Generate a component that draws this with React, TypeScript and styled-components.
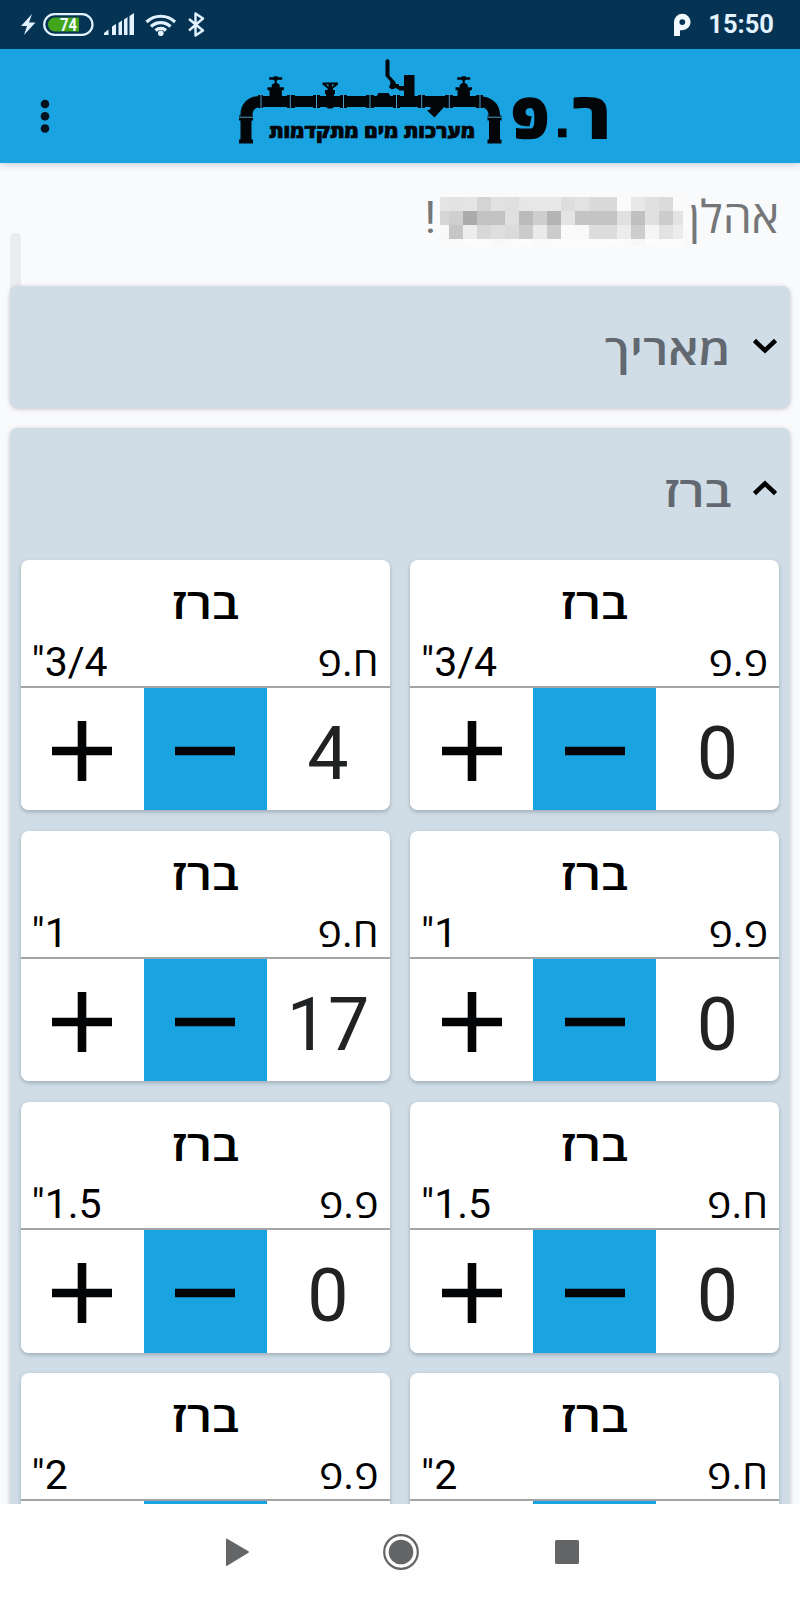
import React from 'react';
import styled, { createGlobalStyle } from 'styled-components';

const GlobalStyle = createGlobalStyle`
  * { box-sizing: border-box; }
  body { margin: 0; background: #f9fafc; font-family: Roboto, "Open Sans", sans-serif; }
`;

const Screen = styled.div`
  width: 800px;
  height: 1600px;
  display: flex;
  flex-direction: column;
  overflow: hidden;
  background: #f9fafc;
`;

const StatusBar = styled.div`
  height: 49px;
  flex: none;
  display: flex;
  justify-content: space-between;
  background: #043353;
`;

const StatusSide = styled.div`
  display: flex;
  align-items: center;
  gap: 17px;
  padding-right: 26px;
`;

const Clock = styled.span`
  font-size: 25.5px;
  font-weight: 700;
  line-height: 51px;
  color: #e2f2ff;
`;

const Header = styled.header`
  height: 114px;
  flex: none;
  display: flex;
  background: #1aa3e1;
  box-shadow: 0 1px 8px rgba(30, 90, 130, 0.3);
`;

const Content = styled.main`
  position: relative;
  height: 1341px;
  flex: none;
  direction: rtl;
  overflow: hidden;
  padding: 0 10px;
`;

const ScrollThumb = styled.div`
  position: absolute;
  left: 10px;
  top: 70px;
  width: 11px;
  height: 120px;
  border-radius: 4px;
  background: #ebecee;
`;

const Greeting = styled.div`
  height: 123px;
  display: flex;
  padding: 17px 11px 0;
  font-size: 45px;
  line-height: 75px;
  color: #757677;
`;

const Hello = styled.span`
  width: 89px;
  white-space: nowrap;
  transform: scaleX(1.03);
  transform-origin: right;
`;

const Mosaic = styled.div`
  display: grid;
  direction: ltr;
  grid-template-columns: 9px repeat(16, 14px) 10px;
  grid-template-rows: repeat(3, 14px) 7px;
  height: 49px;
  margin: 17px 7px 0 4px;
`;

const Pixel = styled.i<{ $shade: string }>`
  background: ${(p) => '#' + p.$shade.repeat(3)};
`;

const Panel = styled.section<{ $open?: boolean }>`
  position: relative;
  height: ${(p) => (p.$open ? '1200px' : '122px')};
  margin-bottom: 20px;
  border-radius: 8px;
  background: #d1dde6;
  box-shadow: 0 1px 4px rgba(60, 50, 80, 0.28);
`;

const PanelHead = styled.div<{ $open?: boolean }>`
  height: ${(p) => (p.$open ? '132px' : '122px')};
  display: flex;
  align-items: flex-start;
  padding: 0 13px;
`;

const Chevron = styled.svg<{ $open?: boolean }>`
  width: 24px;
  height: 16px;
  margin-top: 52px;
  transform: ${(p) => (p.$open ? 'rotate(180deg)' : 'none')};
`;

const PanelTitle = styled.h2`
  margin: 33px 22px 0 0;
  font-size: 42px;
  font-weight: 650;
  line-height: 64px;
  color: #62686f;
  transform: scaleX(1.17);
  transform-origin: right;
`;

const CardGrid = styled.div`
  display: grid;
  grid-template-columns: 369px 369px;
  grid-auto-rows: 250.4px;
  gap: 20.7px 20.5px;
  padding: 0 11px;
`;

const Card = styled.article`
  border-radius: 8px;
  overflow: hidden;
  background: #fff;
  box-shadow: 0 2px 4px rgba(40, 60, 80, 0.3);
`;

const CardHead = styled.div`
  height: 128px;
  padding: 13px 11px 0;
  border-bottom: 2px solid #a3a4a5;
  color: #000;
`;

const CardTitle = styled.h3`
  margin: 0;
  font-size: 42px;
  font-weight: 650;
  line-height: 63px;
  text-align: center;
  transform: scaleX(1.17);
`;

const CardSpec = styled.div`
  display: flex;
  justify-content: space-between;
  font-size: 41px;
  line-height: 52px;
`;

const Stepper = styled.div`
  display: grid;
  grid-template-columns: repeat(3, 1fr);
  height: 122.4px;
`;

const Count = styled.span`
  font-size: 73.5px;
  line-height: 132px;
  text-align: center;
  color: #212223;
`;

const StepButton = styled.button<{ $accent?: boolean }>`
  display: flex;
  align-items: center;
  justify-content: center;
  border: 0;
  padding: 0 0 7px;
  background: ${(p) => (p.$accent ? '#1aa3e1' : '#fff')};
`;

const NavBar = styled.nav`
  position: relative;
  height: 96px;
  flex: none;
  background: #fefefe;
`;

const mosaicRows = [
  'e4 e3 e4 d4 e1 df e7 e8 e8 dd e3 da da fa e8 e0 db fa',
  'd6 cf ab c2 c2 e0 bb ce b4 e4 c5 c4 c4 e0 c0 e0 cc e3',
  'f9 c6 ed d8 de da cc ea cc fa f9 dc dc ec cd f5 e3 ec',
  'f9 f9 fc fb f8 fb fc fa fb fc fb fb fc fb f7 fc fb fc',
];

const items: { kind: string; size: string; count?: number }[] = [
  { kind: 'פ.פ', size: '3/4"', count: 0 },
  { kind: 'ח.פ', size: '3/4"', count: 4 },
  { kind: 'פ.פ', size: '1"', count: 0 },
  { kind: 'ח.פ', size: '1"', count: 17 },
  { kind: 'ח.פ', size: '1.5"', count: 0 },
  { kind: 'פ.פ', size: '1.5"', count: 0 },
  { kind: 'ח.פ', size: '2"' },
  { kind: 'פ.פ', size: '2"' },
];

const StatusIcons = () => (
  <svg width="220" height="49" viewBox="0 0 220 49">
    <path d="M32 14 21 26h6l-3 9L35.500 22.500h-6.500z" fill="#e2f2ff" />
    <rect x="44.200" y="14.200" width="48.300" height="20.600" rx="10.300" fill="none" stroke="#e2f2ff" strokeWidth="2.200" />
    <path d="M79 17.500v14H55a7 7 0 0 1 0-14z" fill="#43a51c" />
    <text x="60" y="31" textLength="17" lengthAdjust="spacingAndGlyphs" fontFamily="Roboto" fontWeight="700" fontSize="18" fill="#f4fcff">74</text>
    <path d="M104 35v-2l4.500-3.500V35zM112 35v-8.500l4-2.500v11zM118.500 35V23l3.500-2.500V35zM124 35V19.500l3.500-2.500v18zM129.500 35V16l4.500-3v22z" fill="#e2f2ff" />
    <g fill="none" stroke="#e2f2ff" strokeWidth="3.200">
      <path d="M146.500 22a20.500 20.500 0 0 1 28.500 0" />
      <path d="M151 26.500a14 14 0 0 1 19.500 0" />
      <path d="M155.500 30.500a7.800 7.800 0 0 1 10.500 0" />
    </g>
    <circle cx="160.800" cy="33.300" r="2.800" fill="#e2f2ff" />
    <path d="M189 19l14 11.500-7.500 5V13.500l7.500 5L189 30.500" fill="none" stroke="#e2f2ff" strokeWidth="2.400" strokeLinejoin="round" />
  </svg>
);

const ParkingIcon = () => (
  <svg width="18" height="49" viewBox="0 0 18 49">
    <path fillRule="evenodd" d="M1 36V22a8.300 8.300 0 1 1 8.300 8.300H7V36zM9.300 19.200a2.900 2.900 0 1 0 0 5.800 2.900 2.900 0 1 0 0-5.800z" fill="#f2faff" />
  </svg>
);

const GateValve = ({ x }: { x: number }) => (
  <g transform={`translate(${x} 0)`}>
    <path d="M-6.500 77.200h4.500v-1h4v1h4.500v2.500h-4l-1.500 1v2l3 2v2.500h4.200v3h-2v8H-6.200v-8h-2v-3H-4v-2.500l3-2v-2l-1.500-1h-4z" />
  </g>
);

const Logo = () => (
  <svg width="800" height="114" viewBox="0 49 800 114">
    <g fill="#04121d">
      <circle cx="45" cy="104" r="4.300" />
      <circle cx="45" cy="116.200" r="4.300" />
      <circle cx="45" cy="128.500" r="4.300" />
    </g>
    <g fill="#020609">
      <path d="M240.500 116c-.5-12 7-20 20-20h218c14 .5 22 8 21.500 20H488.500c.5-5-3-9-9-9H261c-6 0-9 4-8.500 9z" />
      <path d="M239 115.500h14v5h-1.500v19h1.500v4h-14v-4h1.500v-19H239zM487.500 115.500h14v5H500v19h1.500v4h-14v-4h1.500v-19h-1.500z" />
      <path d="M258 95h5v13h-5zM287 95h8v13h-8zM313 95h7v13h-7zM340 95h7v13h-7zM366 95h8v13h-8zM393 95h7v13h-7zM418 95h7v13h-7zM445 95h8v13h-8zM476 95h7v13h-7z" />
      <GateValve x={275.700} />
      <GateValve x={463.700} />
      <path fillRule="evenodd" d="M322.500 82.500H338v2l-5 4v1.500h2v4H334V107l-2 1.500h-4L326 107V94h-1v-4h2.500v-1.500l-5-4zM326 84.500l2.500 2.300V84.500zM334.500 84.500l-2.500 2.300V84.500z" />
      <path d="M376 97l2.500-4h10l2.500 4zM385.500 60.500q2-2.500 4 0v15l5.500 6 1 2.500h3v2h5v-11h10.500V97H404v-6.500h-5V90l-3-2-4 1.500-3-2 1.500-4.500-.5-2-4.500-5z" />
      <path d="M431 106h14l-10.500 11.500-7.500-7 3-1z" />
      <text x="475" y="137.500" direction="rtl" textLength="206" lengthAdjust="spacingAndGlyphs" fontFamily="Open Sans" fontWeight="800" fontSize="19" stroke="#020609" strokeWidth="0.600">מערכות מים מתקדמות</text>
      <text x="511" y="137.500" textLength="38" lengthAdjust="spacingAndGlyphs" fontFamily="Open Sans" fontWeight="800" fontSize="62" stroke="#020609" strokeWidth="1.500">פ</text>
      <rect x="558" y="128.500" width="8.500" height="8.800" />
      <text x="573" y="137.500" textLength="37" lengthAdjust="spacingAndGlyphs" fontFamily="Open Sans" fontWeight="800" fontSize="62" stroke="#020609" strokeWidth="2">ר</text>
    </g>
    <path d="M261 95v13M290.300 95v13M316.500 95v13M343.500 95v13M370 95v13M396.500 95v13M421.700 95v13M449.300 95v13M480 95v13M239 117.200h14M487.500 117.200h14" stroke="#4c9cc6" strokeWidth="1" />
  </svg>
);

const ChevronIcon = ({ open }: { open?: boolean }) => (
  <Chevron $open={open} viewBox="0 0 24 16">
    <path d="M1.500 2.500 12 12.500l10.500-10" fill="none" stroke="#000" strokeWidth="4.500" />
  </Chevron>
);

const StepIcon = ({ plus }: { plus?: boolean }) => (
  <svg width="60" height="60" viewBox="0 0 60 60">
    <path d={plus ? 'M0 30h60M30 0v60' : 'M0 30h60'} stroke="#020304" strokeWidth="8.600" />
  </svg>
);

export default function App() {
  return (
    <Screen>
      <GlobalStyle />
      <StatusBar>
        <StatusIcons />
        <StatusSide>
          <ParkingIcon />
          <Clock>15:50</Clock>
        </StatusSide>
      </StatusBar>
      <Header>
        <Logo />
      </Header>
      <Content>
        <ScrollThumb />
        <Greeting>
          <Hello>אהלן</Hello>
          <Mosaic>
            {mosaicRows.flatMap((row, r) => row.split(' ').map((s, c) => <Pixel key={`${r}-${c}`} $shade={s} />))}
          </Mosaic>
          <span>!</span>
        </Greeting>
        <Panel>
          <PanelHead>
            <ChevronIcon />
            <PanelTitle>מאריך</PanelTitle>
          </PanelHead>
        </Panel>
        <Panel $open>
          <PanelHead $open>
            <ChevronIcon open />
            <PanelTitle>ברז</PanelTitle>
          </PanelHead>
          <CardGrid>
            {items.map((item, i) => (
              <Card key={i}>
                <CardHead>
                  <CardTitle>ברז</CardTitle>
                  <CardSpec>
                    <span>{item.kind}</span>
                    <span>{item.size}</span>
                  </CardSpec>
                </CardHead>
                <Stepper>
                  <Count>{item.count}</Count>
                  <StepButton $accent>
                    <StepIcon />
                  </StepButton>
                  <StepButton>
                    <StepIcon plus />
                  </StepButton>
                </Stepper>
              </Card>
            ))}
          </CardGrid>
        </Panel>
      </Content>
      <NavBar>
        <svg width="800" height="96" viewBox="0 1504 800 96" fill="#646567">
          <path d="M226 1539.500q0-1.500 1.500-.5l21 12.300q1 .7 0 1.400l-21 12.800q-1.500 1-1.500-.5z" />
          <circle cx="401" cy="1552" r="12.300" />
          <circle cx="401" cy="1552" r="16.800" fill="none" stroke="#646567" strokeWidth="2.200" />
          <rect x="555" y="1540" width="24" height="24" rx="1.500" />
        </svg>
      </NavBar>
    </Screen>
  );
}
